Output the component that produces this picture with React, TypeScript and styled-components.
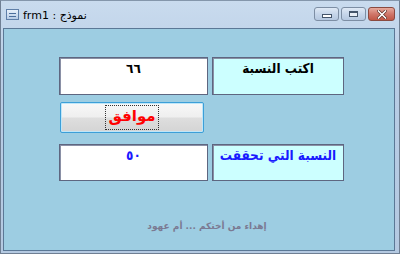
import React from 'react';
import styled, { createGlobalStyle } from 'styled-components';

const Global = createGlobalStyle`
  html, body {
    margin: 0;
    padding: 0;
    width: 400px;
    height: 254px;
    overflow: hidden;
    background: #b9cde4;
  }
`;

const Frame = styled.div`
  width: 400px;
  height: 254px;
  box-sizing: border-box;
  display: flex;
  flex-direction: column;
  background: linear-gradient(180deg, #c9dbee 0%, #b8cde5 30%, #b4c9e1 100%);
  border: 1px solid #6f7f93;
  border-top-color: #8496ab;
  font-family: 'DejaVu Sans', sans-serif;
`;

const TitleBar = styled.div`
  height: 26px;
  display: flex;
  align-items: flex-start;
  padding: 0 4px 0 5px;
`;

const TitleIcon = styled.div`
  margin-top: 8px;
  width: 13px;
  height: 11px;
  border: 1px solid #5f7fa8;
  background: linear-gradient(180deg, #e8f1fb 0%, #b6cbe5 100%);
  box-sizing: border-box;
  display: flex;
  flex-direction: column;
  justify-content: center;
  gap: 2px;
  padding: 0 2px;
  span {
    display: block;
    height: 1px;
    background: #4c6f9c;
  }
`;

const TitleText = styled.div`
  margin: 9px 0 0 4px;
  font-size: 11px;
  color: #000;
  line-height: 12px;
  white-space: nowrap;
  display: flex;
  direction: ltr;
  span {
    unicode-bidi: isolate;
  }
`;

const Spacer = styled.div`
  flex: 1;
`;

const Controls = styled.div`
  display: flex;
  gap: 2px;
  margin-top: 6px;
`;

const Ctl = styled.div<{ $close?: boolean; $w: number }>`
  width: ${(p) => p.$w}px;
  height: 14px;
  box-sizing: border-box;
  border: 1px solid ${(p) => (p.$close ? '#8a4a40' : '#7d8ea4')};
  border-radius: 3px;
  background: ${(p) =>
    p.$close
      ? 'linear-gradient(180deg, #e6a99c 0%, #d0776a 50%, #c15746 100%)'
      : 'linear-gradient(180deg, #dfe9f5 0%, #c6d6ea 50%, #b5c8e0 100%)'};
  display: flex;
  align-items: center;
  justify-content: center;
`;

const MinGlyph = styled.div`
  width: 8px;
  height: 2px;
  margin-top: 4px;
  background: #fff;
  border: 1px solid #44556b;
`;

const MaxGlyph = styled.div`
  width: 9px;
  height: 6px;
  box-sizing: border-box;
  border: 1px solid #44556b;
  border-top-width: 2px;
  background: #e8eef6;
`;

const Client = styled.div`
  flex: 1;
  margin: 1px 4px 2px 2px;
  background: #9dcde2;
  border: 1px solid #5b7896;
  display: flex;
  flex-direction: column;
  align-items: flex-start;
  padding: 28px 0 0 55px;
  box-sizing: border-box;
`;

const Grid = styled.div`
  display: grid;
  grid-template-columns: 149px 132px;
  column-gap: 4px;
  grid-template-rows: 38px 38px auto;
`;

const Field = styled.div<{ $label?: boolean; $color: string }>`
  box-sizing: border-box;
  background: ${(p) => (p.$label ? '#ccffff' : '#ffffff')};
  border: 1px solid #5e6680;
  box-shadow: inset 1px 1px 0 #8a90a6;
  color: ${(p) => p.$color};
  font-family: 'DejaVu Sans Condensed', 'DejaVu Sans', sans-serif;
  font-weight: bold;
  font-size: 13.5px;
  text-align: center;
  line-height: 16px;
  padding-top: 2px;
  white-space: nowrap;
  overflow: hidden;
  direction: rtl;
`;

const ButtonCell = styled.div`
  grid-column: 1 / 2;
  padding: 7px 4px 0 1px;
  box-sizing: border-box;
`;

const OkButton = styled.div`
  width: 144px;
  height: 31px;
  box-sizing: border-box;
  border: 1px solid #3c9fd8;
  border-radius: 2px;
  box-shadow: inset 0 0 0 1px #bfe6f8;
  background: linear-gradient(180deg, #f8f8f8 0%, #efefef 48%, #dedede 52%, #d4d4d4 100%);
  display: flex;
  align-items: center;
  justify-content: center;
`;

const OkLabel = styled.span`
  color: #ff0000;
  font-weight: bold;
  font-size: 15px;
  line-height: 17px;
  padding: 2px 2px 4px;
  outline: 1px dotted #333;
  direction: rtl;
`;

const Row3 = styled.div`
  grid-column: 1 / 3;
  display: grid;
  grid-template-columns: 149px 132px;
  grid-template-rows: 37px;
  column-gap: 4px;
  margin-top: 11px;
`;

const Footer = styled.div`
  align-self: stretch;
  margin: 40px 0 0 -55px;
  padding-left: 16px;
  text-align: center;
  color: #7b7a92;
  font-size: 9px;
  font-weight: bold;
  direction: rtl;
`;

export default function App() {
  return (
    <>
      <Global />
      <Frame>
        <TitleBar>
          <TitleIcon>
            <span />
            <span />
          </TitleIcon>
          <TitleText>
            <span>frm1&nbsp;:&nbsp;</span>
            <span>نموذج</span>
          </TitleText>
          <Spacer />
          <Controls>
            <Ctl $w={25}>
              <MinGlyph />
            </Ctl>
            <Ctl $w={25}>
              <MaxGlyph />
            </Ctl>
            <Ctl $w={27} $close>
              <svg width="10" height="9" viewBox="0 0 10 9">
                <path d="M1.5 1 L8.5 8 M8.5 1 L1.5 8" stroke="#5a2a22" strokeWidth="3" strokeLinecap="square" />
                <path d="M1.5 1 L8.5 8 M8.5 1 L1.5 8" stroke="#ffffff" strokeWidth="1.6" strokeLinecap="square" />
              </svg>
            </Ctl>
          </Controls>
        </TitleBar>
        <Client>
          <Grid>
            <Field $color="#000000">٦٦</Field>
            <Field $label $color="#000000">اكتب النسبة</Field>
            <ButtonCell>
              <OkButton>
                <OkLabel>موافق</OkLabel>
              </OkButton>
            </ButtonCell>
            <div />
            <Row3>
              <Field $color="#1a1aff">٥٠</Field>
              <Field $label $color="#1a1aff">النسبة التي تحققت</Field>
            </Row3>
          </Grid>
          <Footer>إهداء من أختكم ... أم عهود</Footer>
        </Client>
      </Frame>
    </>
  );
}
